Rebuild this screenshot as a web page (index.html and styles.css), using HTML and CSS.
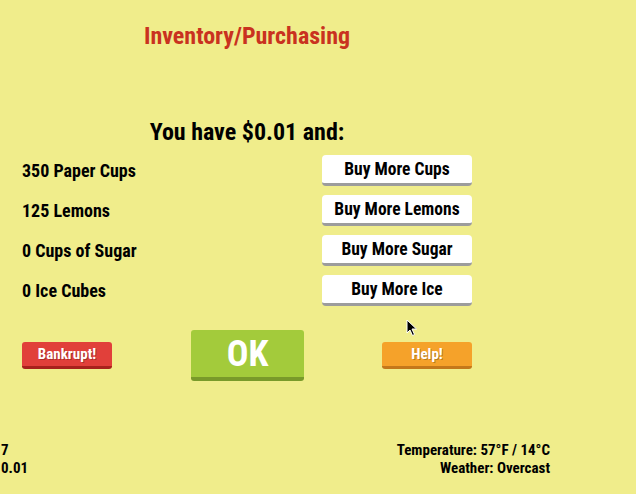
FILE: index.html
```html
<!DOCTYPE html>
<html lang="en">
<head>
    <meta charset="UTF-8">
    <meta name="viewport" content="width=device-width, initial-scale=1.0">
    <title>Lemonade Stand - Inventory</title>
    <link rel="stylesheet" href="styles.css">
</head>
<body>
    <div class="game">
        <div class="panel">
            <h1 class="title">Inventory/Purchasing</h1>
            <h2 class="cash">You have $0.01 and:</h2>

            <!-- Stock rows -->
            <div class="stock">
                <div class="row">
                    <span class="item">350 Paper Cups</span>
                    <button class="buy">Buy More Cups</button>
                </div>
                <div class="row">
                    <span class="item">125 Lemons</span>
                    <button class="buy">Buy More Lemons</button>
                </div>
                <div class="row">
                    <span class="item">0 Cups of Sugar</span>
                    <button class="buy">Buy More Sugar</button>
                </div>
                <div class="row">
                    <span class="item">0 Ice Cubes</span>
                    <button class="buy">Buy More Ice</button>
                </div>
            </div>

            <!-- Actions -->
            <div class="actions">
                <button class="small red">Bankrupt!</button>
                <button class="ok">OK</button>
                <button class="small orange">Help!</button>
            </div>
        </div>

        <div class="status">
            <div class="left">
                <div>7</div>
                <div>0.01</div>
            </div>
            <div class="right">
                <div>Temperature: 57°F / 14°C</div>
                <div>Weather: Overcast</div>
            </div>
        </div>

        <svg class="cursor" width="12" height="18" viewBox="0 0 12 18">
            <path d="M1 1 L1 14 L4 11 L6.5 16.5 L8.5 15.5 L6 10 L10.5 10 Z" fill="#000" stroke="#fff" stroke-width="1"/>
        </svg>
    </div>
</body>
</html>
```

FILE: styles.css
```css
* {
    margin: 0;
    padding: 0;
    box-sizing: border-box;
}

body {
    background-color: #f0ed8b;
    font-family: "Roboto Condensed", Roboto, "Liberation Sans", sans-serif;
    font-stretch: condensed;
    font-weight: bold;
    color: #000;
}

.game {
    position: relative;
    width: 550px;
    height: 494px;
    display: flex;
    flex-direction: column;
}

.panel {
    width: 450px;
    margin-left: 22px;
    padding-top: 21px;
}

.title {
    text-align: center;
    color: #c9321f;
    font-size: 24px;
    line-height: 30px;
}

.cash {
    text-align: center;
    font-size: 24px;
    line-height: 28px;
    margin-top: 67px;
}

.stock {
    margin-top: 9px;
    display: flex;
    flex-direction: column;
    gap: 9px;
}

.row {
    display: flex;
    justify-content: space-between;
    align-items: center;
}

.item {
    font-size: 18px;
}

button {
    font-family: inherit;
    font-stretch: inherit;
    font-weight: bold;
    border: none;
    cursor: pointer;
}

.buy {
    width: 150px;
    height: 31px;
    background: #fff;
    color: #000;
    font-size: 17.5px;
    border-radius: 4px;
    border-bottom: 3px solid #9c9c9c;
}

.actions {
    margin-top: 24px;
    display: flex;
    align-items: center;
}

.small {
    width: 90px;
    height: 27px;
    color: #fff;
    font-size: 15px;
    border-radius: 3px;
    text-shadow: 1px 1px 0 rgba(0, 0, 0, 0.25);
}

.red {
    background: #e1403a;
    border-bottom: 3px solid #a8221c;
}

.orange {
    background: #f5a22a;
    border-bottom: 3px solid #c4781a;
}

.ok {
    width: 113px;
    height: 51px;
    margin-left: 79px;
    margin-right: 78px;
    background: #a3cb3b;
    border-bottom: 4px solid #799a2a;
    color: #fff;
    font-size: 36px;
    border-radius: 3px;
}

.status {
    margin-top: auto;
    margin-bottom: 17px;
    display: flex;
    justify-content: space-between;
    font-size: 15px;
    line-height: 18px;
}

.left {
    padding-left: 1px;
}

.right {
    text-align: right;
}

.cursor {
    position: absolute;
    left: 406px;
    top: 319px;
}
```
